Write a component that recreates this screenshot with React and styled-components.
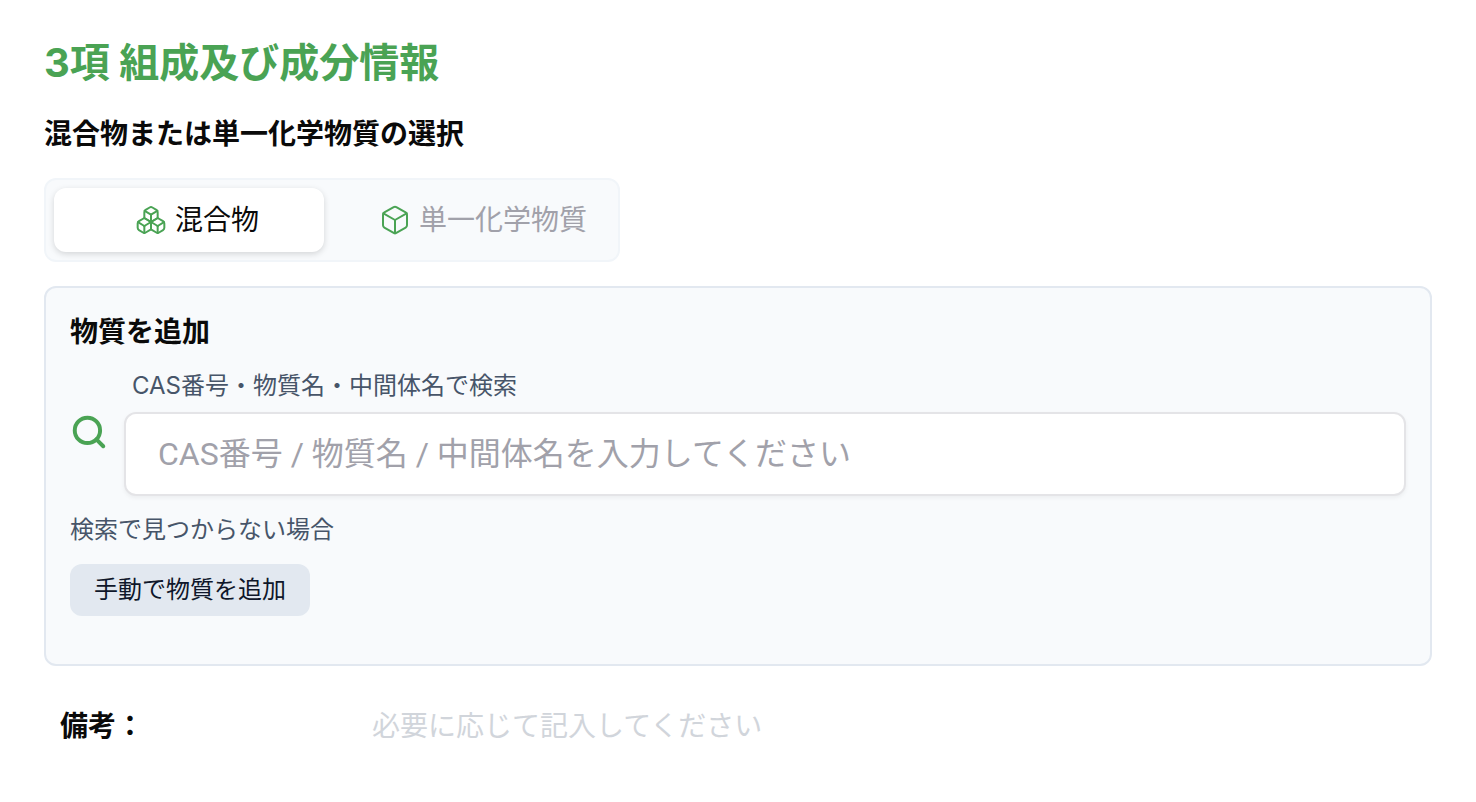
import React, { useState } from "react";
import styled, { createGlobalStyle } from "styled-components";
import { Box, Boxes, Search } from "lucide-react";

const GlobalStyle = createGlobalStyle`
  * {
    box-sizing: border-box;
  }
  body {
    margin: 0;
    background: #ffffff;
    color: #0a0a0a;
    font-family: Inter, "Noto Sans CJK JP", sans-serif;
  }
  button,
  input {
    font-family: inherit;
  }
`;

const Page = styled.main`
  padding: 36px 44px;
`;

const Title = styled.h1`
  margin: 0 0 24px;
  color: #4aa354;
  font-size: 40px;
  line-height: 54px;
  font-weight: 700;
`;

const Heading = styled.h2`
  margin: 0;
  font-size: 28px;
  line-height: 40px;
  font-weight: 700;
`;

const Tabs = styled.div`
  display: flex;
  width: fit-content;
  margin: 24px 0;
  padding: 8px;
  border: 2px solid #f1f5f9;
  border-radius: 12px;
  background: #f8fafc;
`;

const Tab = styled.button`
  display: flex;
  align-items: center;
  justify-content: flex-end;
  gap: 8px;
  width: ${props => (props.$wide ? "270px" : "286px")};
  height: 64px;
  padding: 0 ${props => (props.$wide ? "65px" : "23px")} 0 0;
  border: 0;
  border-radius: 12px;
  background: ${props => (props.$active ? "#ffffff" : "transparent")};
  color: ${props => (props.$active ? "#0a0a0a" : "#a1a1aa")};
  box-shadow: ${props =>
    props.$active ? "0 2px 6px rgba(0, 0, 0, 0.15)" : "none"};
  font-size: 28px;
  line-height: 40px;
  cursor: pointer;

  svg {
    color: #4aa354;
  }
`;

const Panel = styled.section`
  padding: 24px 24px 48px;
  border: 2px solid #e2e8f0;
  border-radius: 12px;
  background: #f8fafc;
`;

const SearchRow = styled.div`
  display: flex;
  align-items: center;
  gap: 16px;
  margin: 16px 0;

  svg {
    flex: none;
    color: #4aa354;
  }
`;

const SearchField = styled.div`
  flex: 1;
`;

const FieldLabel = styled.label`
  display: block;
  margin: 0 8px 8px;
  color: #475569;
  font-size: 24px;
  line-height: 36px;
`;

const SearchInput = styled.input`
  display: block;
  width: 100%;
  height: 84px;
  padding: 0 32px;
  border: 2px solid #e4e4e7;
  border-radius: 12px;
  background: #ffffff;
  box-shadow: 0 2px 4px rgba(0, 0, 0, 0.05);
  font-family: Roboto, "Noto Sans CJK JP", sans-serif;
  font-size: 32px;

  &::placeholder {
    color: #a1a1aa;
  }
`;

const Hint = styled.p`
  margin: 0 0 16px;
  color: #475569;
  font-size: 24px;
  line-height: 36px;
`;

const AddButton = styled.button`
  height: 52px;
  padding: 0 24px;
  border: 0;
  border-radius: 12px;
  background: #e2e8f0;
  color: #0f172a;
  font-size: 24px;
  line-height: 36px;
  cursor: pointer;
`;

const NotesRow = styled.div`
  display: flex;
  align-items: center;
  margin-top: 40px;
  padding: 0 16px;
`;

const NotesLabel = styled.label`
  width: 312px;
  font-size: 28px;
  line-height: 40px;
  font-weight: 700;
`;

const NotesInput = styled.input`
  flex: 1;
  height: 40px;
  padding: 0;
  border: 0;
  background: transparent;
  font-size: 28px;

  &::placeholder {
    color: #d1d5db;
  }
`;

const App = () => {
  const [kind, setKind] = useState("mixture");

  return (
    <React.Fragment>
      <GlobalStyle />
      <Page>
        <Title>3項 組成及び成分情報</Title>
        <Heading>混合物または単一化学物質の選択</Heading>
        <Tabs role="tablist">
          <Tab
            role="tab"
            $wide
            $active={kind === "mixture"}
            aria-selected={kind === "mixture"}
            onClick={() => setKind("mixture")}
          >
            <Boxes size={32} strokeWidth={1.5} />
            混合物
          </Tab>
          <Tab
            role="tab"
            $active={kind === "single"}
            aria-selected={kind === "single"}
            onClick={() => setKind("single")}
          >
            <Box size={32} strokeWidth={1.5} />
            単一化学物質
          </Tab>
        </Tabs>
        <Panel>
          <Heading>物質を追加</Heading>
          <SearchRow>
            <Search size={38} strokeWidth={2.5} />
            <SearchField>
              <FieldLabel htmlFor="substance">
                CAS番号・物質名・中間体名で検索
              </FieldLabel>
              <SearchInput
                id="substance"
                placeholder="CAS番号 / 物質名 / 中間体名を入力してください"
              />
            </SearchField>
          </SearchRow>
          <Hint>検索で見つからない場合</Hint>
          <AddButton type="button">手動で物質を追加</AddButton>
        </Panel>
        <NotesRow>
          <NotesLabel htmlFor="notes">備考：</NotesLabel>
          <NotesInput id="notes" placeholder="必要に応じて記入してください" />
        </NotesRow>
      </Page>
    </React.Fragment>
  );
};

export default App;
